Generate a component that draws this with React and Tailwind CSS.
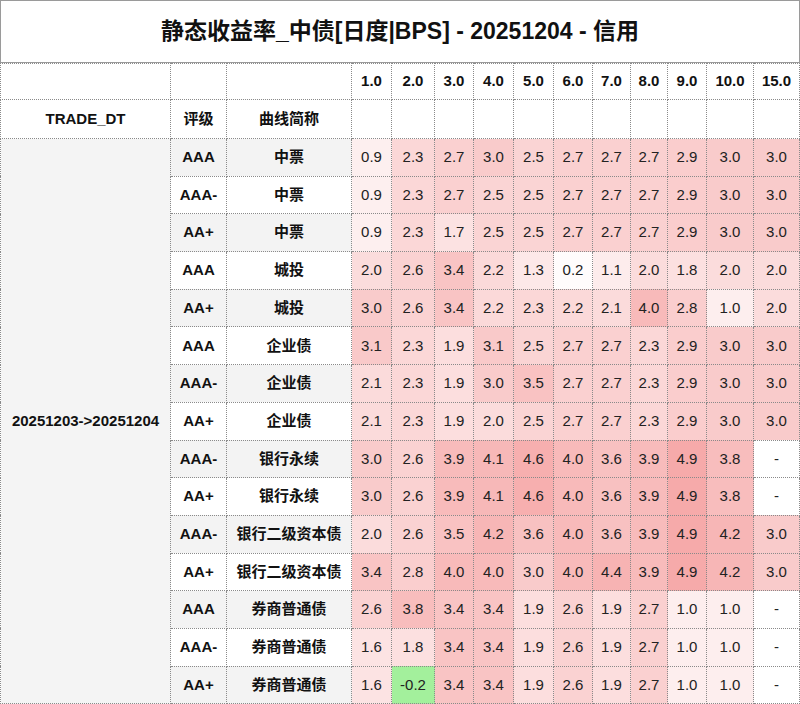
const tenors = ['1.0', '2.0', '3.0', '4.0', '5.0', '6.0', '7.0', '8.0', '9.0', '10.0', '15.0'];
const colWidths = [170, 56, 125, 40, 43, 39, 40, 40, 39, 38, 37, 39, 47, 46];

const rows = [
  ['AAA', '中票', [0.9, 2.3, 2.7, 3.0, 2.5, 2.7, 2.7, 2.7, 2.9, 3.0, 3.0]],
  ['AAA-', '中票', [0.9, 2.3, 2.7, 2.5, 2.5, 2.7, 2.7, 2.7, 2.9, 3.0, 3.0]],
  ['AA+', '中票', [0.9, 2.3, 1.7, 2.5, 2.5, 2.7, 2.7, 2.7, 2.9, 3.0, 3.0]],
  ['AAA', '城投', [2.0, 2.6, 3.4, 2.2, 1.3, 0.2, 1.1, 2.0, 1.8, 2.0, 2.0]],
  ['AA+', '城投', [3.0, 2.6, 3.4, 2.2, 2.3, 2.2, 2.1, 4.0, 2.8, 1.0, 2.0]],
  ['AAA', '企业债', [3.1, 2.3, 1.9, 3.1, 2.5, 2.7, 2.7, 2.3, 2.9, 3.0, 3.0]],
  ['AAA-', '企业债', [2.1, 2.3, 1.9, 3.0, 3.5, 2.7, 2.7, 2.3, 2.9, 3.0, 3.0]],
  ['AA+', '企业债', [2.1, 2.3, 1.9, 2.0, 2.5, 2.7, 2.7, 2.3, 2.9, 3.0, 3.0]],
  ['AAA-', '银行永续', [3.0, 2.6, 3.9, 4.1, 4.6, 4.0, 3.6, 3.9, 4.9, 3.8, null]],
  ['AA+', '银行永续', [3.0, 2.6, 3.9, 4.1, 4.6, 4.0, 3.6, 3.9, 4.9, 3.8, null]],
  ['AAA-', '银行二级资本债', [2.0, 2.6, 3.5, 4.2, 3.6, 4.0, 3.6, 3.9, 4.9, 4.2, 3.0]],
  ['AA+', '银行二级资本债', [3.4, 2.8, 4.0, 4.0, 3.0, 4.0, 4.4, 3.9, 4.9, 4.2, 3.0]],
  ['AAA', '券商普通债', [2.6, 3.8, 3.4, 3.4, 1.9, 2.6, 1.9, 2.7, 1.0, 1.0, null]],
  ['AAA-', '券商普通债', [1.6, 1.8, 3.4, 3.4, 1.9, 2.6, 1.9, 2.7, 1.0, 1.0, null]],
  ['AA+', '券商普通债', [1.6, -0.2, 3.4, 3.4, 1.9, 2.6, 1.9, 2.7, 1.0, 1.0, null]],
];

// heatmap: white at 0, red at max, green below 0
function heat(v) {
  if (v === null) return '#ffffff';
  if (v < 0) return '#a3f09c';
  const t = Math.min(v / 4.9, 1);
  const r = Math.round(255 - t * 9);
  const gb = Math.round(255 - t * 85);
  return `rgb(${r}, ${gb}, ${gb})`;
}

const cell = 'border border-dotted border-[#8a8a8a] text-center p-0';

export default function App() {
  return (
    <div className="w-[800px] h-[704px] bg-white overflow-hidden font-['Liberation_Sans','Noto_Sans_CJK_SC',sans-serif] text-[#111]">
      <div className="h-[63px] border border-[#9a9a9a] flex items-center justify-center">
        <h1 className="text-[23px] font-bold tracking-[0px]">静态收益率_中债[日度|BPS] - 20251204 - 信用</h1>
      </div>

      <table className="table-fixed border-collapse w-[799px]">
        <colgroup>
          {colWidths.map((w, i) => (
            <col key={i} style={{ width: w }} />
          ))}
        </colgroup>
        <tbody>
          <tr className="h-[36px]">
            <td className={cell}></td>
            <td className={cell}></td>
            <td className={cell}></td>
            {tenors.map((t) => (
              <td key={t} className={`${cell} text-[15px] font-bold`}>{t}</td>
            ))}
          </tr>
          <tr className="h-[39px]">
            <td className={`${cell} text-[15px] font-bold`}>TRADE_DT</td>
            <td className={`${cell} text-[15px] font-bold`}>评级</td>
            <td className={`${cell} text-[15px] font-bold`}>曲线简称</td>
            {tenors.map((t) => (
              <td key={t} className={cell}></td>
            ))}
          </tr>
          {rows.map(([grade, curve, vals], i) => {
            const shade = i % 2 === 0 ? 'bg-[#f3f3f3]' : 'bg-white';
            return (
              <tr key={i} className="h-[37.7px]">
                {i === 0 && (
                  <td rowSpan={rows.length} className={`${cell} bg-[#f4f4f4] text-[15px] font-bold`}>
                    20251203-&gt;20251204
                  </td>
                )}
                <td className={`${cell} ${shade} text-[15px] font-bold`}>{grade}</td>
                <td className={`${cell} ${shade} text-[15px] font-bold whitespace-nowrap`}>{curve}</td>
                {vals.map((v, j) => (
                  <td key={j} className={`${cell} text-[15px] text-[#222]`} style={{ backgroundColor: heat(v) }}>
                    {v === null ? '-' : v.toFixed(1)}
                  </td>
                ))}
              </tr>
            );
          })}
        </tbody>
      </table>
    </div>
  );
}
